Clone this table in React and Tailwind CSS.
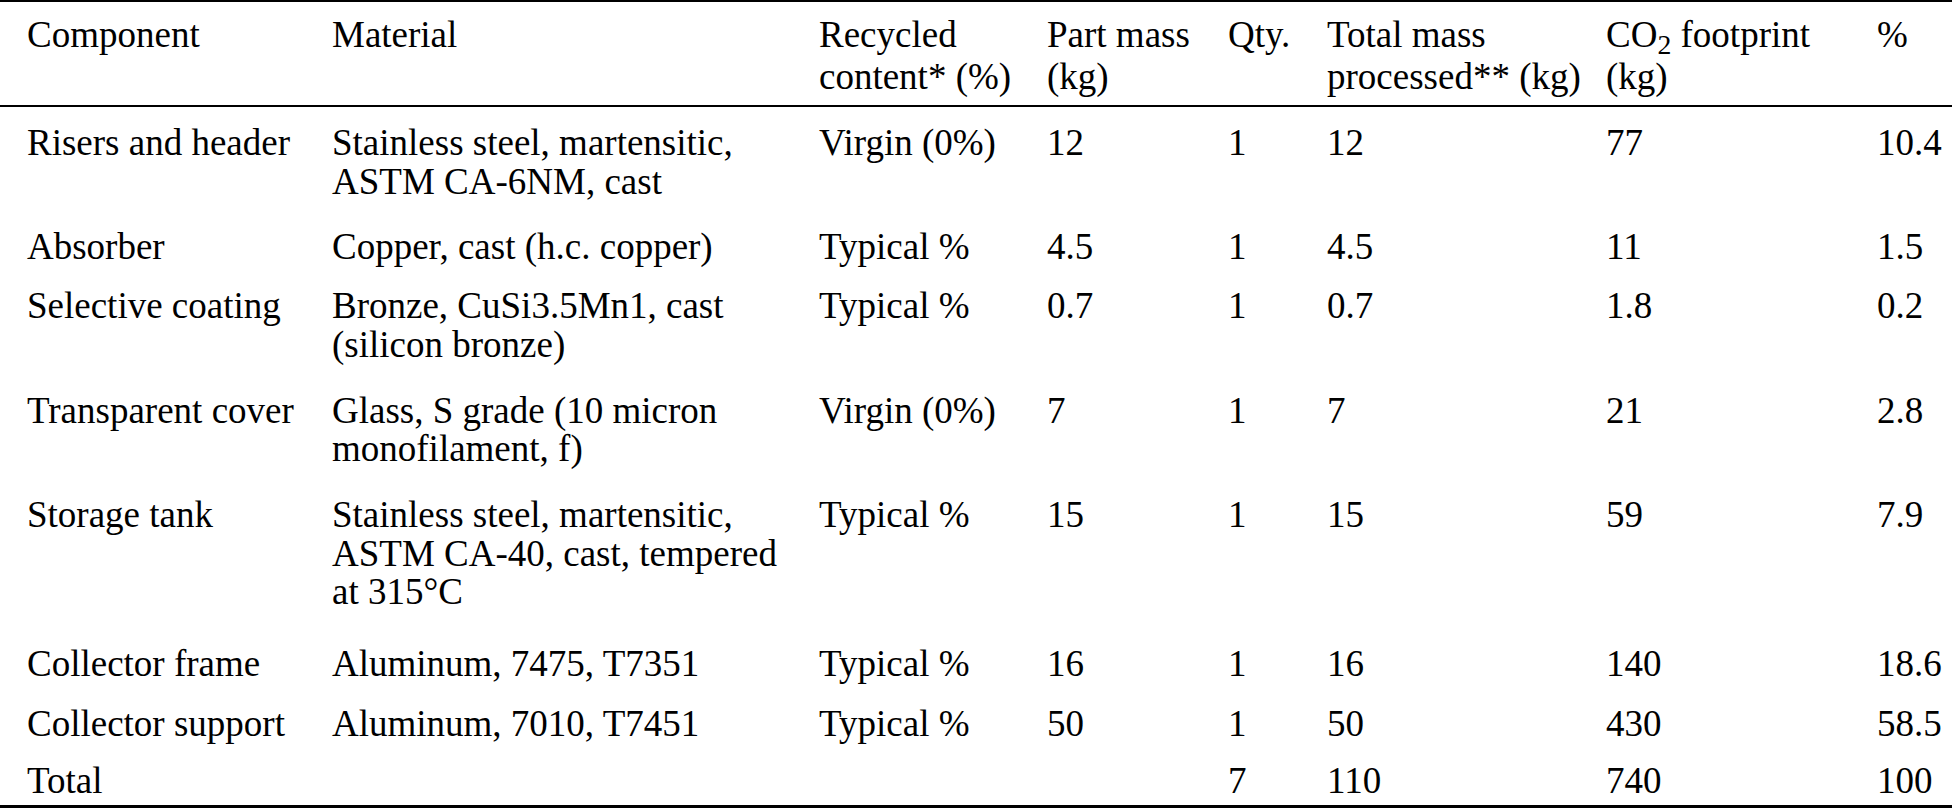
import React from 'react';

// pb tweaks per row so the gaps follow the reference spacing
const rows = [
  { c: 'Risers and header', m: ['Stainless steel, martensitic,', 'ASTM CA-6NM, cast'], r: 'Virgin (0%)', pm: '12', q: '1', tm: '12', co2: '77', pct: '10.4', pb: 'pb-[10px]' },
  { c: 'Absorber', m: ['Copper, cast (h.c. copper)'], r: 'Typical %', pm: '4.5', q: '1', tm: '4.5', co2: '11', pct: '1.5', pb: 'pb-[3px]' },
  { c: 'Selective coating', m: ['Bronze, CuSi3.5Mn1, cast', '(silicon bronze)'], r: 'Typical %', pm: '0.7', q: '1', tm: '0.7', co2: '1.8', pct: '0.2', pb: 'pb-[10px]' },
  { c: 'Transparent cover', m: ['Glass, S grade (10 micron', 'monofilament, f)'], r: 'Virgin (0%)', pm: '7', q: '1', tm: '7', co2: '21', pct: '2.8', pb: 'pb-[10px]' },
  { c: 'Storage tank', m: ['Stainless steel, martensitic,', 'ASTM CA-40, cast, tempered', 'at 315°C'], r: 'Typical %', pm: '15', q: '1', tm: '15', co2: '59', pct: '7.9', pb: 'pb-[16px]' },
  { c: 'Collector frame', m: ['Aluminum, 7475, T7351'], r: 'Typical %', pm: '16', q: '1', tm: '16', co2: '140', pct: '18.6', pb: 'pb-[4px]' },
  { c: 'Collector support', m: ['Aluminum, 7010, T7451'], r: 'Typical %', pm: '50', q: '1', tm: '50', co2: '430', pct: '58.5', pb: 'pb-[2px]' },
  { c: 'Total', m: [''], r: '', pm: '', q: '7', tm: '110', co2: '740', pct: '100', pb: 'pb-[4px]' },
];

function Cell({ children, first, pb }) {
  return (
    <td className={`align-top pt-[17px] ${pb} ${first ? 'pl-[27px]' : ''}`}>
      {children}
    </td>
  );
}

function HeadCell({ children, first }) {
  return (
    <th className={`align-top text-left font-normal pt-[12px] pb-[7px] leading-[42px] ${first ? 'pl-[27px]' : ''}`}>
      {children}
    </th>
  );
}

export default function App() {
  return (
    <div className="w-[1952px] h-[810px] bg-white text-black font-['Liberation_Serif','Times_New_Roman',serif] text-[37px] leading-[38.7px]">
      <table className="w-full table-fixed border-collapse border-t-2 border-b-[3px] border-black">
        <colgroup>
          <col className="w-[332px]" />
          <col className="w-[487px]" />
          <col className="w-[228px]" />
          <col className="w-[181px]" />
          <col className="w-[99px]" />
          <col className="w-[279px]" />
          <col className="w-[271px]" />
          <col />
        </colgroup>
        <thead>
          <tr className="border-b-2 border-black">
            <HeadCell first>Component</HeadCell>
            <HeadCell>Material</HeadCell>
            <HeadCell>
              Recycled
              <br />
              content* (%)
            </HeadCell>
            <HeadCell>
              Part mass
              <br />
              (kg)
            </HeadCell>
            <HeadCell>Qty.</HeadCell>
            <HeadCell>
              Total mass
              <br />
              processed** (kg)
            </HeadCell>
            <HeadCell>
              CO<sub>2</sub> footprint
              <br />
              (kg)
            </HeadCell>
            <HeadCell>%</HeadCell>
          </tr>
        </thead>
        <tbody>
          {rows.map((row) => (
            <tr key={row.c}>
              <Cell first pb={row.pb}>{row.c}</Cell>
              <Cell pb={row.pb}>
                {row.m.map((line, i) => (
                  <div key={i}>{line}</div>
                ))}
              </Cell>
              <Cell pb={row.pb}>{row.r}</Cell>
              <Cell pb={row.pb}>{row.pm}</Cell>
              <Cell pb={row.pb}>{row.q}</Cell>
              <Cell pb={row.pb}>{row.tm}</Cell>
              <Cell pb={row.pb}>{row.co2}</Cell>
              <Cell pb={row.pb}>{row.pct}</Cell>
            </tr>
          ))}
        </tbody>
      </table>
    </div>
  );
}
